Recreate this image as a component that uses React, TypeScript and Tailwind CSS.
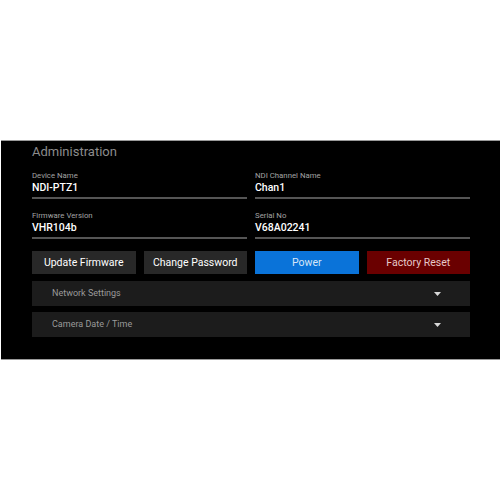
import React from 'react';

const font = { fontFamily: 'Roboto, "Liberation Sans", sans-serif' };

function Field({ label, value }: { label: string; value: string }) {
  return (
    <div className="border-b-2 border-[#555] pb-[2px]">
      <div className="text-[7.8px] leading-[10px] text-[#a3a3a3]">{label}</div>
      <div className="text-[10.5px] leading-[14px] font-medium text-white">{value}</div>
    </div>
  );
}

function Caret() {
  return (
    <svg width="7" height="4" viewBox="0 0 7 4" className="mr-[29px]">
      <path d="M0 0 L7 0 L3.5 4 Z" fill="#d8d8d8" />
    </svg>
  );
}

function Section({ title }: { title: string }) {
  return (
    <div className="flex h-[25px] items-center justify-between bg-[#1c1c1c]">
      <span className="pl-[20px] text-[9px] text-[#9a9a9a]">{title}</span>
      <Caret />
    </div>
  );
}

export default function App() {
  return (
    <div className="h-[500px] w-[500px] bg-white pt-[140px]" style={font}>
      <div className="ml-[1px] h-[220px] w-[499px] border-y border-[#9a9a9a] bg-black pl-[31px] pt-[3px]">
        <div className="w-[438px]">
          <div className="text-[13px] leading-[16px] text-[#8c8c8c]">Administration</div>

          <div className="mt-[11px] grid grid-cols-2 gap-x-[8px] gap-y-[12px]">
            <Field label="Device Name" value="NDI-PTZ1" />
            <Field label="NDI Channel Name" value="Chan1" />
            <Field label="Firmware Version" value="VHR104b" />
            <Field label="Serial No" value="V68A02241" />
          </div>

          <div className="mt-[12px] grid grid-cols-4 gap-x-[8px] text-[10.5px]">
            <button className="h-[23px] bg-[#282828] text-white">Update Firmware</button>
            <button className="h-[23px] bg-[#282828] text-white">Change Password</button>
            <button className="h-[23px] bg-[#0a73d9] text-[#d6e6f7]">Power</button>
            <button className="h-[23px] bg-[#6a0000] text-[#e6c9c9]">Factory Reset</button>
          </div>

          <div className="mt-[7px] flex flex-col gap-[6px]">
            <Section title="Network Settings" />
            <Section title="Camera Date / Time" />
          </div>
        </div>
      </div>
    </div>
  );
}
